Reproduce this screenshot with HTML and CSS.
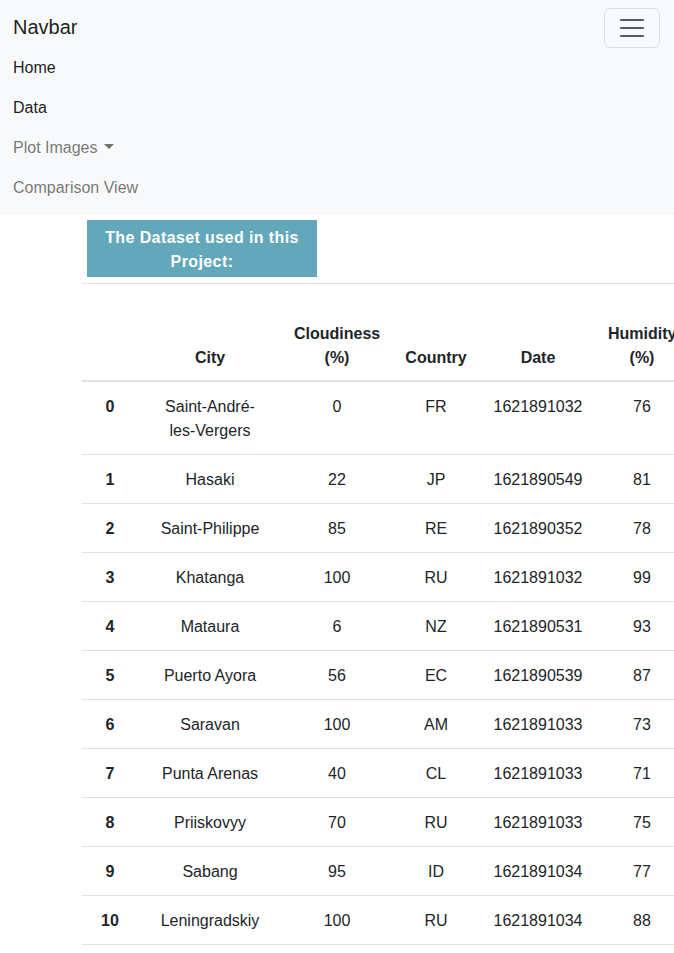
FILE: index.html
```html
<!DOCTYPE html>
<html lang="en">
<head>
<meta charset="utf-8">
<title>Dataset</title>
<link rel="stylesheet" href="styles.css">
</head>
<body>
<nav class="navbar">
  <div class="navbar-inner">
    <div class="brand-row">
      <a class="brand" href="#">Navbar</a>
      <button class="toggler" type="button" aria-label="Toggle navigation">
        <svg class="toggler-icon" viewBox="0 0 30 30" width="30" height="30"><path d="M4 7h22M4 15h22M4 23h22" stroke="rgba(33,37,41,0.75)" stroke-width="2" stroke-linecap="round" stroke-miterlimit="10" fill="none"/></svg>
      </button>
    </div>
    <ul class="nav">
      <li><a class="nav-link active" href="#">Home</a></li>
      <li><a class="nav-link active" href="#">Data</a></li>
      <li><a class="nav-link dropdown" href="#">Plot Images</a></li>
      <li><a class="nav-link" href="#">Comparison View</a></li>
    </ul>
  </div>
</nav>
<main class="content">
  <h5 class="badge">The Dataset used in this Project:</h5>
  <hr class="rule">
  <div class="table-wrap">
    <table class="dataframe">
      <colgroup>
        <col class="c-idx"><col class="c-city"><col class="c-cloud"><col class="c-country"><col class="c-date"><col class="c-hum">
      </colgroup>
      <thead>
        <tr><th></th><th>City</th><th>Cloudiness (%)</th><th>Country</th><th>Date</th><th>Humidity (%)</th></tr>
      </thead>
      <tbody>
        <tr><th>0</th><td class="city">Saint-André-les-Vergers</td><td>0</td><td>FR</td><td>1621891032</td><td>76</td></tr>
        <tr><th>1</th><td class="city">Hasaki</td><td>22</td><td>JP</td><td>1621890549</td><td>81</td></tr>
        <tr><th>2</th><td class="city">Saint-Philippe</td><td>85</td><td>RE</td><td>1621890352</td><td>78</td></tr>
        <tr><th>3</th><td class="city">Khatanga</td><td>100</td><td>RU</td><td>1621891032</td><td>99</td></tr>
        <tr><th>4</th><td class="city">Mataura</td><td>6</td><td>NZ</td><td>1621890531</td><td>93</td></tr>
        <tr><th>5</th><td class="city">Puerto Ayora</td><td>56</td><td>EC</td><td>1621890539</td><td>87</td></tr>
        <tr><th>6</th><td class="city">Saravan</td><td>100</td><td>AM</td><td>1621891033</td><td>73</td></tr>
        <tr><th>7</th><td class="city">Punta Arenas</td><td>40</td><td>CL</td><td>1621891033</td><td>71</td></tr>
        <tr><th>8</th><td class="city">Priiskovyy</td><td>70</td><td>RU</td><td>1621891033</td><td>75</td></tr>
        <tr><th>9</th><td class="city">Sabang</td><td>95</td><td>ID</td><td>1621891034</td><td>77</td></tr>
        <tr><th>10</th><td class="city">Leningradskiy</td><td>100</td><td>RU</td><td>1621891034</td><td>88</td></tr>
      </tbody>
    </table>
  </div>
</main>
</body>
</html>
```

FILE: styles.css
```css
* { box-sizing: border-box; }
html, body {
  margin: 0;
  padding: 0;
  font-family: "Liberation Sans", Arial, sans-serif;
  font-size: 16px;
  line-height: 24px;
  color: #212529;
  background: #fff;
}
a { text-decoration: none; }

.navbar {
  background: #f8f9fa;
  padding: 8px 0 7px;
}
.navbar-inner {
  padding: 0 12px 0 13px;
}
.brand-row {
  display: flex;
  align-items: center;
  justify-content: space-between;
}
.brand {
  font-size: 20px;
  line-height: 30px;
  padding: 4px 0 6px;
  color: rgba(0, 0, 0, 0.9);
}
.toggler {
  width: 56px;
  height: 40px;
  padding: 4px 12px;
  margin-right: 2px;
  border: 1px solid rgba(0, 0, 0, 0.1);
  border-radius: 6px;
  background: transparent;
  display: flex;
  align-items: center;
  justify-content: center;
}
.toggler-icon { display: block; }

.nav {
  list-style: none;
  margin: 0;
  padding: 0;
}
.nav-link {
  display: block;
  padding: 8px 0;
  color: rgba(0, 0, 0, 0.55);
}
.nav-link.active { color: rgba(0, 0, 0, 0.9); }
.nav-link.dropdown::after {
  content: "";
  display: inline-block;
  margin-left: 7px;
  vertical-align: 4px;
  border-top: 5px solid;
  border-left: 5px solid transparent;
  border-right: 5px solid transparent;
}

.content {
  padding-left: 82px;
  overflow: hidden;
}
.badge {
  width: 230px;
  margin: 5px 0 0 5px;
  padding: 6px 12px 3px;
  background: #63a8ba;
  color: #fff;
  font-size: 16px;
  font-weight: 700;
  letter-spacing: 0.4px;
  line-height: 24px;
  text-align: center;
}
.rule {
  margin: 6px 0 0;
  border: 0;
  border-top: 1px solid #dee2e6;
  height: 0;
}
.table-wrap {
  padding-top: 24px;
}
.dataframe {
  border-collapse: collapse;
  table-layout: fixed;
  width: 606px;
  text-align: center;
}
.c-idx { width: 56px; }
.c-city { width: 144px; }
.c-cloud { width: 110px; }
.c-country { width: 88px; }
.c-date { width: 116px; }
.c-hum { width: 92px; }

.dataframe th,
.dataframe td {
  padding: 13px 12px 11px;
  line-height: 24px;
  vertical-align: top;
}
.dataframe td.city {
  padding-left: 20px;
  padding-right: 20px;
}
.dataframe thead th {
  vertical-align: bottom;
  border-bottom: 2px solid #dee2e6;
  font-weight: 700;
  padding-top: 14px;
  padding-bottom: 10px;
}
.dataframe tbody th,
.dataframe tbody td {
  border-bottom: 1px solid #dee2e6;
}
.dataframe tbody th { font-weight: 700; }
```
